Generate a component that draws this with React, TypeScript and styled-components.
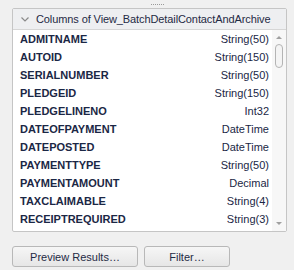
import styled, { createGlobalStyle } from "styled-components";

const GlobalStyle = createGlobalStyle`
  html, body {
    margin: 0;
    padding: 0;
    background-color: #f0f0f0;
  }
  body {
    font-family: "Liberation Sans", Arial, sans-serif;
    font-size: 11px;
  }
`;

const Page = styled.div`
  width: 294px;
  height: 270px;
  box-sizing: border-box;
  padding: 0 7px 0 12px;
  display: flex;
  flex-direction: column;
`;

const Grip = styled.div`
  height: 8px;
  display: flex;
  justify-content: center;
  align-items: center;
  padding-left: 16px;
`;

const GripDots = styled.span`
  width: 13px;
  height: 1px;
  background-image: linear-gradient(to right, #9a9a9a 50%, transparent 50%);
  background-size: 2px 1px;
`;

const Panel = styled.div`
  border: 1px solid #c5c5c5;
  border-radius: 2px;
  background-color: #ffffff;
  height: 224px;
  box-sizing: border-box;
  display: flex;
  flex-direction: column;
`;

const Header = styled.div`
  height: 20px;
  background-color: #eeeff1;
  border-bottom: 1px solid #d6d6d6;
  display: flex;
  align-items: center;
  gap: 7px;
  padding-left: 8px;
  color: #1f2a44;
  font-size: 11px;
  letter-spacing: -0.1px;
  white-space: nowrap;
  overflow: hidden;
  flex-shrink: 0;
`;

const Body = styled.div`
  flex: 1;
  display: flex;
  min-height: 0;
`;

const List = styled.div`
  flex: 1;
`;

const Row = styled.div`
  height: 18px;
  display: flex;
  align-items: center;
  justify-content: space-between;
  padding: 0 3px 0 7px;
  color: #1b2745;
`;

const Name = styled.span`
  font-weight: bold;
`;

const Type = styled.span``;

const ScrollBar = styled.div`
  width: 14px;
  background-color: #f7f7f7;
  display: flex;
  flex-direction: column;
  align-items: center;
  padding: 6px 0 6px;
  box-sizing: border-box;
`;

const Arrow = styled.span<{ $down?: boolean }>`
  width: 0;
  height: 0;
  border-left: 3px solid transparent;
  border-right: 3px solid transparent;
  ${(p) =>
    p.$down
      ? "border-top: 3px solid #a0a0a0;"
      : "border-bottom: 3px solid #a0a0a0;"}
`;

const Track = styled.div`
  flex: 1;
  width: 100%;
  display: flex;
  justify-content: center;
  padding-top: 5px;
`;

const Thumb = styled.div`
  width: 6px;
  height: 22px;
  border: 1px solid #b4b4b4;
  border-radius: 4px;
  background-color: #f4f4f4;
`;

const Buttons = styled.div`
  display: flex;
  gap: 6px;
  margin-top: 14px;
`;

const Button = styled.button<{ $width: number }>`
  width: ${(p) => p.$width}px;
  height: 21px;
  border: 1px solid #b8b8b8;
  border-radius: 3px;
  background: linear-gradient(#f6f6f6, #e6e6e6);
  color: #1f2a44;
  font-family: "Liberation Sans", Arial, sans-serif;
  font-size: 11px;
  padding: 0;
`;

const Chevron = () => (
  <svg width="8" height="5" viewBox="0 0 8 5">
    <path d="M0.5 0.5 L4 4 L7.5 0.5" fill="none" stroke="#8a8a8a" strokeWidth="1.2" />
  </svg>
);

const columns: [string, string][] = [
  ["ADMITNAME", "String(50)"],
  ["AUTOID", "String(150)"],
  ["SERIALNUMBER", "String(50)"],
  ["PLEDGEID", "String(150)"],
  ["PLEDGELINENO", "Int32"],
  ["DATEOFPAYMENT", "DateTime"],
  ["DATEPOSTED", "DateTime"],
  ["PAYMENTTYPE", "String(50)"],
  ["PAYMENTAMOUNT", "Decimal"],
  ["TAXCLAIMABLE", "String(4)"],
  ["RECEIPTREQUIRED", "String(3)"],
];

export default function App() {
  return (
    <>
      <GlobalStyle />
      <Page>
        <Grip>
          <GripDots />
        </Grip>
        <Panel>
          <Header>
            <Chevron />
            Columns of View_BatchDetailContactAndArchive
          </Header>
          <Body>
            <List>
              {columns.map(([name, type]) => (
                <Row key={name}>
                  <Name>{name}</Name>
                  <Type>{type}</Type>
                </Row>
              ))}
            </List>
            <ScrollBar>
              <Arrow />
              <Track>
                <Thumb />
              </Track>
              <Arrow $down />
            </ScrollBar>
          </Body>
        </Panel>
        <Buttons>
          <Button $width={126}>Preview Results…</Button>
          <Button $width={86}>Filter…</Button>
        </Buttons>
      </Page>
    </>
  );
}
